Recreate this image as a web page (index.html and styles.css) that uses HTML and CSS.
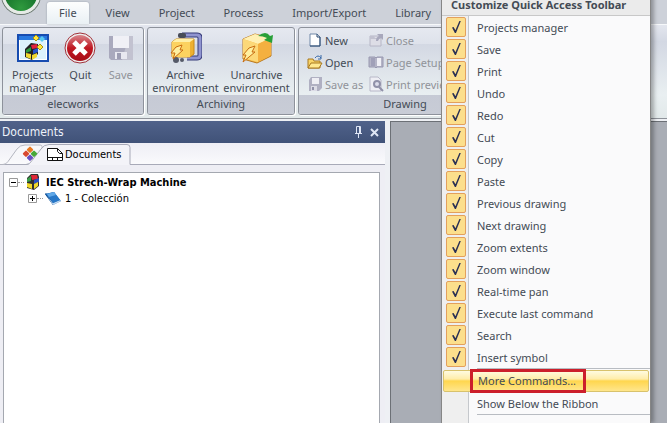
FILE: index.html
```html
<!DOCTYPE html>
<html lang="en">

<head>
    <meta charset="UTF-8">
    <meta name="viewport" content="width=device-width, initial-scale=1.0">
    <title>elecworks</title>
    <link rel="stylesheet" href="styles.css">
</head>

<body>
    <header class="top">
        <button class="app-button" aria-label="Application menu"></button>
        <nav class="tabs">
            <a href="#" class="active">File</a>
            <a href="#">View</a>
            <a href="#">Project</a>
            <a href="#">Process</a>
            <a href="#">Import/Export</a>
            <a href="#">Library</a>
        </nav>
    </header>

    <section class="ribbon">
        <div class="group group-app">
            <div class="group-body">
                <button class="big">
                    <svg width="32" height="32" viewBox="0 0 32 32">
                        <rect x="1" y="3" width="30" height="26" fill="#fff" stroke="#174cb0" stroke-width="2"/>
                        <rect x="2" y="4" width="28" height="4" fill="#2878e0"/>
                        <rect x="3" y="8" width="26" height="19" fill="#dcf2fc"/>
                        <path d="M8 17l6-6 7 1v10l-6 6-7-3z" fill="#222"/>
                        <path d="M14 13l6-1 1 4-6 1z" fill="#e0203c"/>
                        <path d="M9 18l5-3v4l-5 2z" fill="#2a9a3c"/>
                        <path d="M16 18l5-2v4l-5 2z" fill="#2554c8"/>
                        <path d="M9 21l5 1v5l-5-2zM15 23l5-2v4l-5 3z" fill="#f0d830"/>
                        <path d="M16 6l3-3 3 3-3 3zM20 15l3-3 3 3-3 3z" fill="#ffe840" stroke="#a89010"/>
                        <path d="M22 7l3-3 3 3-3 3z" fill="#58c8f0"/>
                    </svg>
                    <span>Projects<br>manager</span>
                </button>
                <button class="big">
                    <svg width="32" height="32" viewBox="0 0 32 32">
                        <defs>
                            <linearGradient id="red" x1="0" y1="0" x2="0" y2="1">
                                <stop offset="0" stop-color="#d8868c"/>
                                <stop offset=".5" stop-color="#c01822"/>
                                <stop offset="1" stop-color="#a80c16"/>
                            </linearGradient>
                        </defs>
                        <circle cx="16" cy="16" r="15" fill="#eee" stroke="#a03038"/>
                        <circle cx="16" cy="16" r="13" fill="url(#red)"/>
                        <path d="M10 10l12 12M22 10L10 22" stroke="#fff" stroke-width="5"/>
                    </svg>
                    <span>Quit</span>
                </button>
                <button class="big" disabled>
                    <svg width="32" height="32" viewBox="0 0 32 32">
                        <path d="M4 4h24v24H6l-2-2z" fill="#a9a9bd"/>
                        <path d="M24 4h4v24H17z" fill="#c2c2d0"/>
                        <rect x="8" y="4" width="16" height="12" fill="#f0f0f6"/>
                        <rect x="10" y="20" width="12" height="7" fill="#e8e8f0"/>
                        <rect x="12" y="21" width="4" height="6" fill="#9c9cb2"/>
                    </svg>
                    <span>Save</span>
                </button>
            </div>
            <div class="group-title">elecworks</div>
        </div>

        <div class="group group-archive">
            <div class="group-body">
                <button class="big">
                    <svg width="32" height="32" viewBox="0 0 32 32">
                        <path d="M12 3h15q3 0 3 3v17q0 3-3 3H17" fill="none" stroke="#353a78" stroke-width="5"/>
                        <path d="M12 3h15q3 0 3 3v17q0 3-3 3H17" fill="none" stroke="#9094d0" stroke-width="3"/>
                        <path d="M2 10l4-3h18v15l-4 3H2z" fill="#eeb030" stroke="#c88a18"/>
                        <path d="M2 10h18v15H2z" fill="#fcd260"/>
                        <path d="M2 10l4-3h18l-4 3z" fill="#fff0a8"/>
                        <rect x="8" y="1" width="8" height="5" rx="2" fill="#484c58"/>
                        <circle cx="6" cy="28" r="3" fill="#555a68"/>
                        <circle cx="12" cy="28" r="2" fill="#555a68"/>
                        <path d="M6 15l6-2-2 5h3L3 27l2-6H1z" fill="#fff0a0" stroke="#c86c10"/>
                    </svg>
                    <span>Archive<br>environment</span>
                </button>
                <button class="big">
                    <svg width="32" height="32" viewBox="0 0 32 32">
                        <path d="M2 7l12-5 16 4v18l-14 7-14-4z" fill="#f8bc48" stroke="#b87820"/>
                        <path d="M2 7l12-5 16 4-13 6z" fill="#fff0b4"/>
                        <path d="M2 7l15 5v18L2 26z" fill="#fcd878"/>
                        <path d="M17 12l13-6v17l-13 7z" fill="#f4b040"/>
                        <path d="M17 4q8-6 12 0l3-1-1 8-8-3 3-2q-4-2-9-2z" fill="#28a038"/>
                        <path d="M8 16l6-2-3 6h3L2 30l3-7H2z" fill="#fff0a0" stroke="#c86c10"/>
                    </svg>
                    <span>Unarchive<br>environment</span>
                </button>
            </div>
            <div class="group-title">Archiving</div>
        </div>

        <div class="group group-drawing">
            <div class="group-body small-list">
                <button class="small">
                    <svg width="16" height="16" viewBox="0 0 16 16">
                        <path d="M3 2h7l3 3v9H3z" fill="#fff" stroke="#7088a8"/>
                        <path d="M10 2v3h3M13 5v9H3" fill="none" stroke="#284870"/>
                    </svg>
                    New
                </button>
                <button class="small" disabled>
                    <svg width="16" height="16" viewBox="0 0 16 16">
                        <path d="M2 4h11v10H2z" fill="#dddde6" stroke="#b6b6c6"/>
                        <path d="M2 4h4l1 2h6v1H2z" fill="#c2c2d0"/>
                        <path d="M8 9q0-4 3-5L9 2h6v6l-2-2q-2 0-3 3z" fill="#a8a8bc"/>
                    </svg>
                    Close
                </button>
                <button class="small">
                    <svg width="16" height="16" viewBox="0 0 16 16">
                        <path d="M1 14V5h5l1 2h6v7z" fill="#f8d468" stroke="#a87820"/>
                        <path d="M1 14l3-5h11l-3 5z" fill="#ffe890" stroke="#a87820"/>
                        <path d="M8 4q3-4 6 0M14 1v4h-3" fill="none" stroke="#3868a8"/>
                    </svg>
                    Open
                </button>
                <button class="small" disabled>
                    <svg width="16" height="16" viewBox="0 0 16 16">
                        <path d="M1 3h6l1 1 1-1h6v10H9l-1 1-1-1H1z" fill="#b4b4c6" stroke="#9898b0"/>
                        <path d="M3 4h4v8H3z" fill="#a0a0b8"/>
                        <path d="M9 4h4v8H9z" fill="#f0f0f6"/>
                    </svg>
                    Page Setup
                </button>
                <button class="small" disabled>
                    <svg width="16" height="16" viewBox="0 0 16 16">
                        <path d="M4 1h11v11l-3 3H2V4z" fill="#b0b0c2"/>
                        <path d="M5 2h7v6H5z" fill="#eeeef4"/>
                        <path d="M4 10h6v5H4z" fill="#dcdce6"/>
                        <path d="M5 11h2v3H5z" fill="#9090a8"/>
                    </svg>
                    Save as
                </button>
                <button class="small" disabled>
                    <svg width="16" height="16" viewBox="0 0 16 16">
                        <path d="M2 1h8l3 3v11H2z" fill="#eeeef4" stroke="#b8b8c8"/>
                        <circle cx="9" cy="8" r="3" fill="#dcdcea" stroke="#9090a8" stroke-width="2"/>
                        <path d="M11 11l4 4" stroke="#9090a8" stroke-width="2"/>
                    </svg>
                    Print preview
                </button>
            </div>
            <div class="group-title">Drawing</div>
        </div>
    </section>

    <main class="workspace">
        <aside class="dock">
            <div class="dock-title">
                <h2>Documents</h2>
                <button aria-label="Auto hide">
                    <svg width="9" height="12" viewBox="0 0 9 12" fill="none" stroke="#dfe6f5">
                        <path d="M2.500 7V.5h4V7M1 7.500h7M4.500 8v4M5.500 1v6"/>
                    </svg>
                </button>
                <button aria-label="Close">
                    <svg width="9" height="9" viewBox="0 0 9 9" stroke="#dfe6f5" stroke-width="2">
                        <path d="M1 1l7 7M8 1L1 8"/>
                    </svg>
                </button>
            </div>
            <div class="dock-tabs">
                <svg class="tab-shape" width="132" height="22" viewBox="0 0 132 22">
                    <path d="M0 21.500h3q3 0 5-3L17 6q3-4 8-4h14q4 0 3 3" fill="#f7f7fa" stroke="#b4b6c0"/>
                    <path d="M26 22q4 0 6-4L41 6q3-5 8-5h78q3 0 3 3v17.500h2V22z" fill="#f3f3f8"/>
                    <path d="M26 21.500q4 0 6-4L41 6q3-4.500 8-4.500h78q3 0 3 3v17h2" fill="none" stroke="#a8aab8"/>
                    <rect x="28" y="4" width="5" height="5" rx="1" transform="rotate(45 30 6)" fill="#e87820"/>
                    <rect x="24" y="8" width="5" height="5" rx="1" transform="rotate(45 26 10)" fill="#d84830"/>
                    <rect x="32" y="8" width="5" height="5" rx="1" transform="rotate(45 34 10)" fill="#48a838"/>
                    <rect x="28" y="12" width="5" height="5" rx="1" transform="rotate(45 30 14)" fill="#6850c0"/>
                    <path d="M47.500 5.500h10l5 5v7h-15zM57.500 5.500v3l2 2h3" fill="#fff" stroke="#111"/>
                    <path d="M47.500 14.500h15M52.500 14.500v3M57.500 14.500v3" stroke="#111"/>
                </svg>
                <a href="#" class="dock-tab">Documents</a>
            </div>
            <div class="tree">
                <div class="node">
                    <svg width="9" height="9" viewBox="0 0 9 9"><path d="M.5.5h8v8h-8z" fill="#fff" stroke="#999"/><path d="M2 4.500h5" stroke="#000"/></svg>
                    <i class="dots"></i>
                    <svg width="14" height="16" viewBox="0 0 14 16">
                        <path d="M1 4l4-4h7l1 3v9l-5 4-7-2z" fill="#303030"/>
                        <path d="M5 1l6 0 1 4-6 1z" fill="#e02838"/>
                        <path d="M1 5l4-3v5l-4 1z" fill="#38a048"/>
                        <path d="M8 6l5-2v4l-5 2z" fill="#2850c0"/>
                        <path d="M1 9l5 1v5l-5-2zM8 10l4-2v4l-4 3z" fill="#f0d828"/>
                    </svg>
                    <strong>IEC Strech-Wrap Machine</strong>
                </div>
                <div class="node child">
                    <svg width="9" height="9" viewBox="0 0 9 9"><path d="M.5.5h8v8h-8z" fill="#fff" stroke="#999"/><path d="M2 4.500h5M4.500 2v5" stroke="#000"/></svg>
                    <i class="dots"></i>
                    <svg width="16" height="16" viewBox="0 0 16 16">
                        <path d="M0 4l9-2 7 9-8 4z" fill="#2070c0"/>
                        <path d="M0 4l8 11v-3L1 3z" fill="#104888"/>
                        <path d="M2 6l6 7 7-3 1 1-8 4z" fill="#c0d8f0"/>
                        <path d="M1 4l8-2 6 8-7 3z" fill="#2878c8"/>
                        <path d="M2 4l7-2 2 3-7 2z" fill="#60a8e8"/>
                    </svg>
                    <span>1 - Colección</span>
                </div>
            </div>
        </aside>
        <div class="canvas"></div>
    </main>

    <div class="menu">
        <h3>Customize Quick Access Toolbar</h3>
        <label><input type="checkbox" checked>Projects manager</label>
        <label><input type="checkbox" checked>Save</label>
        <label><input type="checkbox" checked>Print</label>
        <label><input type="checkbox" checked>Undo</label>
        <label><input type="checkbox" checked>Redo</label>
        <label><input type="checkbox" checked>Cut</label>
        <label><input type="checkbox" checked>Copy</label>
        <label><input type="checkbox" checked>Paste</label>
        <label><input type="checkbox" checked>Previous drawing</label>
        <label><input type="checkbox" checked>Next drawing</label>
        <label><input type="checkbox" checked>Zoom extents</label>
        <label><input type="checkbox" checked>Zoom window</label>
        <label><input type="checkbox" checked>Real-time pan</label>
        <label><input type="checkbox" checked>Execute last command</label>
        <label><input type="checkbox" checked>Search</label>
        <label><input type="checkbox" checked>Insert symbol</label>
        <hr>
        <button class="selected"><span>More Commands...</span></button>
        <button>Show Below the Ribbon</button>
        <hr>
    </div>
</body>

</html>
```

FILE: styles.css
```css
* {
    box-sizing: border-box;
}

body {
    margin: 0;
    height: 100vh;
    display: flex;
    flex-direction: column;
    position: relative;
    overflow: hidden;
    font-family: "Noto Sans", sans-serif;
    font-size: 11px;
    color: #444b55;
    background-color: #cdd1d9;
}

button {
    border: none;
    background: none;
    padding: 0;
    font: inherit;
    color: inherit;
}

button:disabled {
    color: #909399;
}

a {
    color: inherit;
    text-decoration: none;
}

svg {
    flex: none;
}

/* tab strip */
.top {
    height: 24px;
    flex: none;
    position: relative;
    padding-left: 47px;
}

.app-button {
    position: absolute;
    left: 2px;
    top: -24px;
    width: 38px;
    height: 38px;
    border-radius: 50%;
    border: 3px solid #e6ebe6;
    background: radial-gradient(circle at 50% 90%, #2f9a3e, #14702a 60%);
    box-shadow: 0 0 0 1px #6c7a70;
}

.tabs {
    display: flex;
    height: 24px;
    padding-top: 2px;
}

.tabs a {
    padding: 0 12px;
    line-height: 22px;
    margin-right: 5px;
}

.tabs .active {
    background: linear-gradient(#fdfefe, #e9f0f4);
    border-radius: 3px 3px 0 0;
    box-shadow: 0 0 2px #8f97a3;
}

/* ribbon */
.ribbon {
    display: flex;
    flex: none;
    gap: 3px;
    height: 95px;
    padding: 2px 2px 3px;
    border-top: 1px solid #f6f8fa;
    border-bottom: 1px solid #8e9299;
    background: linear-gradient(#e3e6ee, #d3d8e3 18%, #e9eff1 75%, #e2e9ea);
}

.group {
    display: flex;
    flex-direction: column;
    flex: none;
    border: 1px solid #8d929b;
    border-radius: 3px;
    box-shadow: 1px 1px 0 #fff;
    background: linear-gradient(#e6e9f0, #dee2eb 18%, #d3d8e3 19%, #e9eff1 78%);
    overflow: hidden;
}

.group-app {
    width: 142px;
}

.group-archive {
    width: 148px;
}

.group-drawing {
    width: 214px;
}

.group-body {
    flex: 1;
    display: flex;
    padding: 4px 4px 0;
    gap: 4px;
    justify-content: space-around;
    align-items: flex-start;
}

.group-title {
    height: 19px;
    line-height: 18px;
    text-align: center;
    background: linear-gradient(#c6cad5, #c8ccd6);
}

.big {
    display: flex;
    flex-direction: column;
    align-items: center;
    gap: 4px;
    line-height: 13px;
}

.small-list {
    display: grid;
    grid-template-columns: 57px 1fr;
    grid-auto-rows: 22px;
    gap: 0 4px;
    padding: 1px 8px 0;
}

.small {
    display: flex;
    align-items: center;
    gap: 2px;
    height: 22px;
    white-space: nowrap;
}

/* workspace */
.workspace {
    flex: 1;
    display: flex;
    gap: 5px;
    padding-top: 2px;
    background-color: #eef0f4;
    min-height: 0;
}

.dock {
    width: 385px;
    display: flex;
    flex-direction: column;
    background-color: #eeeef4;
    font-family: "DejaVu Sans Condensed", "DejaVu Sans", sans-serif;
    color: #000;
}

.dock-title {
    display: flex;
    align-items: center;
    gap: 7px;
    height: 22px;
    padding: 0 6px 0 2px;
    color: #eef2fa;
    background: linear-gradient(#50628a, #405278);
}

.dock-title h2 {
    flex: 1;
    margin: 0;
    font-size: 12px;
    font-weight: normal;
}

.dock-title button {
    display: flex;
}

.dock-tabs {
    display: flex;
    position: relative;
    height: 22px;
    border-bottom: 1px solid #a8aab8;
    background: linear-gradient(#eeeef5, #fafafc);
}

.tab-shape {
    position: absolute;
    left: 0;
    top: 0;
}

.dock-tab {
    position: relative;
    padding-left: 65px;
    line-height: 24px;
}

.tree {
    flex: 1;
    margin: 7px 5px 0 3px;
    padding-top: 1px;
    border: 1px solid #a4a8b0;
    border-bottom: none;
    background-color: #fff;
}

.node {
    display: flex;
    align-items: center;
    height: 16px;
    padding-left: 5px;
}

.node strong,
.node span {
    margin-left: 6px;
}

.node.child {
    padding-left: 24px;
}

.node.child span {
    margin-left: 4px;
}

.dots {
    width: 6px;
    margin-right: 2px;
    border-top: 1px dotted #999;
}

.canvas {
    flex: 1;
    border-left: 1px solid #6c7076;
    border-top: 1px solid #6c7076;
    background-color: #a9adb5;
}

/* drop-down menu */
.menu {
    position: absolute;
    left: 441px;
    top: -6px;
    bottom: 0;
    width: 210px;
    overflow: hidden;
    border-left: 1px solid #868686;
    border-right: 1px solid #868686;
    background: linear-gradient(90deg, #efefef 26px, #c5c8cc 26px, #c5c8cc 27px, #fafafb 27px);
    box-shadow: 3px 0 4px rgba(0, 0, 0, 0.3);
}

.menu h3 {
    margin: 0;
    height: 22px;
    padding-left: 9px;
    line-height: 22px;
    font-size: 11px;
    white-space: nowrap;
    background-color: #ebebeb;
    border-bottom: 1px solid #c8c8c8;
}

.menu label,
.menu button {
    display: flex;
    align-items: center;
    width: 100%;
    height: 22px;
    padding-left: 4px;
}

.menu input {
    appearance: none;
    position: relative;
    flex: none;
    width: 20px;
    height: 20px;
    margin: 0 11px 0 0;
    border: 1px solid #e3a05c;
    border-radius: 2px;
    background-color: #fcdf8c;
}

.menu input:checked::before {
    content: "";
    position: absolute;
    left: 5px;
    top: 3px;
    width: 9px;
    height: 12px;
    background-color: #2a3054;
    clip-path: polygon(0 54%, 18% 50%, 38% 78%, 82% 0, 98% 0, 44% 100%, 32% 100%);
}

.menu hr {
    margin: 0 0 1px 35px;
    border: none;
    border-top: 1px solid #b8bcc2;
}

.menu button {
    padding-left: 35px;
}

.menu .selected {
    margin: 0 1px;
    width: calc(100% - 2px);
    padding-left: 26px;
    border: 1px solid #d8c26c;
    border-radius: 2px;
    background: linear-gradient(#fffbe0, #ffedaa 40%, #ffd64e 50%, #ffe68c);
}

.menu .selected span {
    height: 24px;
    line-height: 18px;
    padding: 0 7px 0 5px;
    border: 3px solid #cc1f2b;
}
```
